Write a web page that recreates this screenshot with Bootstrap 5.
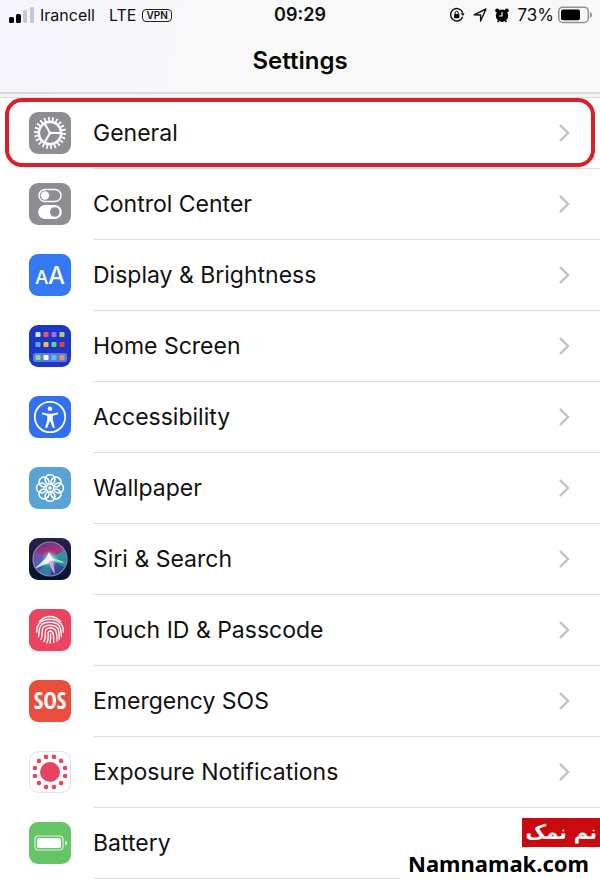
<!DOCTYPE html>
<html lang="en">
<head>
<meta charset="utf-8">
<meta name="viewport" content="width=device-width, initial-scale=1">
<title>Settings</title>
<link href="https://cdn.jsdelivr.net/npm/bootstrap@5.3.0/dist/css/bootstrap.min.css" rel="stylesheet">
<style>
body { font-family: Inter, "Liberation Sans", sans-serif; color: #111; background: #fff; }
.top-area { background: linear-gradient(100deg, #f6f5fd, #f8f8f9 35%, #f8f8f8); border-bottom: 2px solid #d9d9dd; }
.status-bar { height: 30px; padding: 0 8px; font-size: 17px; line-height: 30px; }
.status-side { flex: 1 1 0; }
.carrier { font-size: 16px; gap: 6px; }
.clock { font-size: 18px; line-height: 32px; font-weight: 600; }
.vpn { font-size: 10px; line-height: 11px; font-weight: 600; border: 1px solid #222; border-radius: 4px; padding: 0 3px; }
.page-title { font-size: 24px; line-height: 32px; font-weight: 600; padding: 15px 0; color: #080808; }
.section-gap { height: 4px; background: #f5f5f8; border-bottom: 1px solid #dcdce0; }
.setting-link { color: #111; padding-left: 29px; gap: 22px; }
.setting-link > svg { flex: none; margin-bottom: 1px; }
.setting-label { height: 71px; border-bottom: 1px solid #dcdcde; font-size: 23px; padding-right: 29px; }
.highlight { position: absolute; inset: 0 5px 2px 5px; border: 4px solid #da1f2b; border-radius: 17px; pointer-events: none; }
.watermark { position: absolute; right: 0; bottom: 0; width: 200px; background: #fff; }
.wm-badge { background: #cb0a10; color: #fff; font: bold 20px/29px "DejaVu Sans", sans-serif; padding: 0 3px; }
.wm-site { font: bold 22px/32px "Noto Sans", "Open Sans", sans-serif; color: #000; padding-right: 11px; }
</style>
</head>
<body>
<main class="position-relative overflow-hidden">
<header class="top-area">
  <div class="status-bar d-flex align-items-center">
    <div class="status-side carrier d-flex align-items-center">
      <svg width="26" height="16" viewBox="0 0 26 16" aria-hidden="true"><rect x="1" y="10" width="5" height="6" rx="1.5"/><rect x="8" y="7" width="5" height="9" rx="1.5"/><rect x="15" y="3" width="4" height="13" rx="1.5" fill="#c9c8d0"/><rect x="22" y="0" width="4" height="16" rx="1.5" fill="#c9c8d0"/></svg>
      <span class="pe-2">Irancell</span><span>LTE</span><span class="vpn">VPN</span>
    </div>
    <time class="clock">09:29</time>
    <div class="status-side d-flex align-items-center justify-content-end">
      <svg width="16" height="16" viewBox="0 0 16 16" fill="none" stroke="#111" stroke-width="1.4" aria-label="Rotation lock"><path d="M13.7 9.8A6.2 6.2 0 1 1 13.7 5.8"/><path d="M11.5 6.2h4L14 9z" fill="#111" stroke="none"/><rect x="5" y="7" width="5.4" height="4.2" rx=".6" fill="#111" stroke="none"/><path d="M6.1 7.5V6a1.6 1.6 0 0 1 3.2 0v1.5" stroke-width="1"/></svg>
      <svg class="ms-2" width="14" height="14" viewBox="0 0 14 14" fill="none" stroke="#111" stroke-width="1.4" stroke-linejoin="round" aria-label="Location"><path d="M1 6.8 13 1 7.6 13V7z"/></svg>
      <svg class="ms-2" width="14" height="15" viewBox="0 0 14 15" aria-label="Alarm"><circle cx="7" cy="7.7" r="6.2"/><circle cx="2.2" cy="2.5" r="2"/><circle cx="11.8" cy="2.500" r="2"/><path d="m2.500 14 2-2.500m7 2.500-2-2.500" stroke="#111" stroke-width="1.6"/><path d="M7 4v4H4" fill="none" stroke="#f8f8f8" stroke-width="1.2"/></svg>
      <span class="ms-2">73%</span>
      <svg class="ms-1" width="34" height="18" viewBox="0 0 34 18" aria-label="Battery"><rect x=".8" y="1.2" width="29.5" height="15.2" rx="4" fill="none" stroke="#929295" stroke-width="1.5"/><rect x="3" y="3.4" width="19" height="10.8" rx="2"/><path d="M32 6q2 .7 2 3t-2 3z" fill="#929295"/></svg>
    </div>
  </div>
  <h1 class="page-title text-center m-0">Settings</h1>
</header>
<div class="section-gap"></div>
<nav aria-label="Settings">
  <ul class="list-unstyled m-0">
    <li class="position-relative">
      <a href="#general" class="setting-link d-flex align-items-center text-decoration-none">
        <svg width="42" height="42" viewBox="0 0 42 42" fill="none" stroke="#fff" aria-hidden="true"><rect width="42" height="42" rx="9" fill="#8e8d92" stroke="none"/><circle cx="21" cy="21" r="14" stroke-width="4" pathLength="44" stroke-dasharray=".9 1.1"/><circle cx="21" cy="21" r="11.2" stroke-width="2.4"/><path d="M21 21h12M21 21l-6-10.4M21 21l-6 10.4" stroke-width="2"/><circle cx="21" cy="21" r="1.6" fill="#fff" stroke="none"/></svg>
        <span class="setting-label flex-fill d-flex align-items-center justify-content-between">General<svg width="13" height="20" viewBox="0 0 13 20" fill="none" stroke="#c2c2c5" stroke-width="2.4" aria-hidden="true"><path id="chevron" d="m2 2 8 8-8 8"/></svg></span>
      </a>
      <div class="highlight"></div>
    </li>
    <li><a href="#control-center" class="setting-link d-flex align-items-center text-decoration-none">
      <svg width="42" height="42" viewBox="0 0 42 42" aria-hidden="true"><rect width="42" height="42" rx="9" fill="#8e8d92"/><rect x="10" y="6.5" width="22" height="12" rx="6" fill="none" stroke="#fff" stroke-width="1.5"/><circle cx="16" cy="12.5" r="4.2" fill="#fff"/><rect x="9.2" y="22" width="23.6" height="14" rx="7" fill="#fff"/><circle cx="25.8" cy="29" r="4.8" fill="#8e8d92"/></svg>
      <span class="setting-label flex-fill d-flex align-items-center justify-content-between">Control Center<svg width="13" height="20" fill="none" stroke="#c2c2c5" stroke-width="2.4" aria-hidden="true"><use href="#chevron"/></svg></span></a></li>
    <li><a href="#display" class="setting-link d-flex align-items-center text-decoration-none">
      <svg width="42" height="42" viewBox="0 0 42 42" fill="#fff" font-family="Inter, sans-serif" font-weight="500" aria-hidden="true"><rect width="42" height="42" rx="9" fill="#3478f2"/><text x="6" y="30" font-size="19">A</text><text x="19" y="30" font-size="24">A</text></svg>
      <span class="setting-label flex-fill d-flex align-items-center justify-content-between">Display &amp; Brightness<svg width="13" height="20" fill="none" stroke="#c2c2c5" stroke-width="2.4" aria-hidden="true"><use href="#chevron"/></svg></span></a></li>
    <li><a href="#home-screen" class="setting-link d-flex align-items-center text-decoration-none">
      <svg width="42" height="42" viewBox="0 0 42 42" aria-hidden="true"><rect width="42" height="42" rx="9" fill="#1c36c8"/><rect x="4" y="28" width="34" height="9" rx="2.5" fill="#5b7bdc"/>
        <g><rect x="6.5" y="7" width="5" height="5" rx="1" fill="#d8e6f6"/><rect x="14.5" y="7" width="5" height="5" rx="1" fill="#e8595c"/><rect x="22.5" y="7" width="5" height="5" rx="1" fill="#a767ec"/><rect x="30.5" y="7" width="5" height="5" rx="1" fill="#b9cf58"/><rect x="6.5" y="17" width="5" height="5" rx="1" fill="#59a9ee"/><rect x="14.5" y="17" width="5" height="5" rx="1" fill="#f6bd3d"/><rect x="22.5" y="17" width="5" height="5" rx="1" fill="#57d98f"/><rect x="30.5" y="17" width="5" height="5" rx="1" fill="#ec3c35"/><rect x="6.5" y="30" width="5" height="5" rx="1" fill="#82d998"/><rect x="14.5" y="30" width="5" height="5" rx="1" fill="#fff"/><rect x="22.5" y="30" width="5" height="5" rx="1" fill="#65b8f4"/><rect x="30.5" y="30" width="5" height="5" rx="1" fill="#ee9560"/></g></svg>
      <span class="setting-label flex-fill d-flex align-items-center justify-content-between">Home Screen<svg width="13" height="20" fill="none" stroke="#c2c2c5" stroke-width="2.4" aria-hidden="true"><use href="#chevron"/></svg></span></a></li>
    <li><a href="#accessibility" class="setting-link d-flex align-items-center text-decoration-none">
      <svg width="42" height="42" viewBox="0 0 42 42" aria-hidden="true"><rect width="42" height="42" rx="9" fill="#3370f0"/><circle cx="21" cy="21" r="15.2" fill="none" stroke="#fff" stroke-width="1.8"/><circle cx="21" cy="12.7" r="2.3" fill="#fff"/><path d="m13 16.500 6 1.200q2 .3 4 0l6-1.200v1.800l-5.200 1.500v4.100l2 7.600-1.900.5-2.900-7.200-2.900 7.200-1.900-.5 2-7.600v-4.100L13 18.300z" fill="#fff"/></svg>
      <span class="setting-label flex-fill d-flex align-items-center justify-content-between">Accessibility<svg width="13" height="20" fill="none" stroke="#c2c2c5" stroke-width="2.4" aria-hidden="true"><use href="#chevron"/></svg></span></a></li>
    <li><a href="#wallpaper" class="setting-link d-flex align-items-center text-decoration-none">
      <svg width="42" height="42" viewBox="0 0 42 42" aria-hidden="true"><rect width="42" height="42" rx="9" fill="#57a3d3"/><g fill="#2f86bd" fill-opacity=".2"><circle cx="21" cy="21" r="13"/></g><g fill="none" stroke="#fff" stroke-width="1.7"><circle id="petal" cx="21" cy="12.5" r="4.9"/><use href="#petal" transform="rotate(45 21 21)"/><use href="#petal" transform="rotate(90 21 21)"/><use href="#petal" transform="rotate(135 21 21)"/><use href="#petal" transform="rotate(180 21 21)"/><use href="#petal" transform="rotate(225 21 21)"/><use href="#petal" transform="rotate(270 21 21)"/><use href="#petal" transform="rotate(315 21 21)"/></g><circle cx="21" cy="21" r="1.8" fill="#fff"/></svg>
      <span class="setting-label flex-fill d-flex align-items-center justify-content-between">Wallpaper<svg width="13" height="20" fill="none" stroke="#c2c2c5" stroke-width="2.4" aria-hidden="true"><use href="#chevron"/></svg></span></a></li>
    <li><a href="#siri" class="setting-link d-flex align-items-center text-decoration-none">
      <svg width="42" height="42" viewBox="0 0 42 42" aria-hidden="true"><defs><linearGradient id="night" x2="0" y2="1"><stop stop-color="#262250"/><stop offset="1" stop-color="#07102e"/></linearGradient><linearGradient id="orb" x1=".3" x2=".6" y2="1"><stop stop-color="#6b3278"/><stop offset=".35" stop-color="#b0327c"/><stop offset=".55" stop-color="#3a68ae"/><stop offset="1" stop-color="#2a3a88"/></linearGradient><radialGradient id="glow"><stop stop-color="#fff"/><stop offset=".3" stop-color="#c5f1ff" stop-opacity=".7"/><stop offset="1" stop-color="#4fd0e8" stop-opacity="0"/></radialGradient></defs>
        <rect width="42" height="42" rx="9" fill="url(#night)"/><circle cx="21" cy="21" r="17" fill="url(#orb)" stroke="#8b87a8" stroke-width="1.2"/><path d="M21 21 35 12q5 9 0 17z" fill="#27a896" opacity=".7"/><path d="M21 21 7 30q-4-9 1-17z" fill="#4f62c4" opacity=".7"/><path d="M21 21 10 33q5 5 12 4z" fill="#2bb0b6" opacity=".5"/><circle cx="21" cy="21" r="9" fill="url(#glow)"/><path d="m20 14 3.500 6L36 24.500l-12.500-1.500L20 25 6 30.500 17 20z" fill="#f2fcff" opacity=".9"/><path d="m20 23 4-.5 2 13.500q-4.500-4-6-13z" fill="#eca4dc" opacity=".9"/><path d="m25 21 11 4.500-11-2z" fill="#75e6b6"/></svg>
      <span class="setting-label flex-fill d-flex align-items-center justify-content-between">Siri &amp; Search<svg width="13" height="20" fill="none" stroke="#c2c2c5" stroke-width="2.4" aria-hidden="true"><use href="#chevron"/></svg></span></a></li>
    <li><a href="#touch-id" class="setting-link d-flex align-items-center text-decoration-none">
      <svg width="42" height="42" viewBox="0 0 42 42" aria-hidden="true"><rect width="42" height="42" rx="9" fill="#eb4460"/><g fill="none" stroke="#fff" stroke-width="1.4" stroke-linecap="round"><path d="M10.500 12.500Q15 7.500 21 7.500t10.500 5"/><path d="M7.700 23C7 15 13 10.300 21 10.300S35 15 34.300 23"/><path d="M9.500 27.500C10.800 24 7.200 13.300 21 13.300S31.200 24 32.500 27.500"/><path d="M12 30.500C15 25 9.500 16.200 21 16.200S29.500 25 30.200 30"/><path d="M15 32.500C18.500 26 13 19 21 19s6.600 7.500 7 13"/><path d="M18 33.700C21 28 17 22 21 22c3.800 0 3.700 5 3.800 11.500"/><path d="M21.500 25q.7 3.500-.4 9"/></g></svg>
      <span class="setting-label flex-fill d-flex align-items-center justify-content-between">Touch ID &amp; Passcode<svg width="13" height="20" fill="none" stroke="#c2c2c5" stroke-width="2.4" aria-hidden="true"><use href="#chevron"/></svg></span></a></li>
    <li><a href="#sos" class="setting-link d-flex align-items-center text-decoration-none">
      <svg width="42" height="42" viewBox="0 0 42 42" aria-hidden="true"><rect width="42" height="42" rx="9" fill="#eb4d3d"/><text x="21" y="29" text-anchor="middle" fill="#fff" font-family="'Open Sans Condensed', Roboto, sans-serif" font-size="23" font-weight="700">SOS</text></svg>
      <span class="setting-label flex-fill d-flex align-items-center justify-content-between">Emergency SOS<svg width="13" height="20" fill="none" stroke="#c2c2c5" stroke-width="2.4" aria-hidden="true"><use href="#chevron"/></svg></span></a></li>
    <li><a href="#exposure" class="setting-link d-flex align-items-center text-decoration-none">
      <svg width="42" height="42" viewBox="0 0 42 42" fill="#e74363" aria-hidden="true"><rect x=".5" y=".5" width="41" height="41" rx="9" fill="#fff" stroke="#e3e3e5"/><circle cx="21" cy="21" r="10"/><g id="dot-trio"><circle cx="25" cy="5.9" r="2.3"/><circle cx="32.1" cy="9.9" r="2.3"/><circle cx="36.1" cy="17" r="2.3"/></g><use href="#dot-trio" transform="rotate(90 21 21)"/><use href="#dot-trio" transform="rotate(180 21 21)"/><use href="#dot-trio" transform="rotate(270 21 21)"/></svg>
      <span class="setting-label flex-fill d-flex align-items-center justify-content-between">Exposure Notifications<svg width="13" height="20" fill="none" stroke="#c2c2c5" stroke-width="2.4" aria-hidden="true"><use href="#chevron"/></svg></span></a></li>
    <li><a href="#battery" class="setting-link d-flex align-items-center text-decoration-none">
      <svg width="42" height="42" viewBox="0 0 42 42" aria-hidden="true"><rect width="42" height="42" rx="9" fill="#64c466"/><rect x="6" y="14" width="28" height="14" rx="3.5" fill="none" stroke="#fff" stroke-opacity=".8" stroke-width="1.2"/><rect x="8" y="16" width="24" height="10" rx="2" fill="#fff"/><path d="M36 18.500q2.400.7 2.400 2.500T36 23.500z" fill="#fff" opacity=".8"/></svg>
      <span class="setting-label flex-fill d-flex align-items-center">Battery</span></a></li>
  </ul>
</nav>
<div class="watermark d-flex flex-column align-items-end">
  <span class="wm-badge" lang="fa" dir="rtl">نم نمک</span>
  <span class="wm-site">Namnamak.com</span>
</div>
</main>
<script src="https://cdn.jsdelivr.net/npm/bootstrap@5.3.0/dist/js/bootstrap.bundle.min.js"></script>
</body>
</html>
